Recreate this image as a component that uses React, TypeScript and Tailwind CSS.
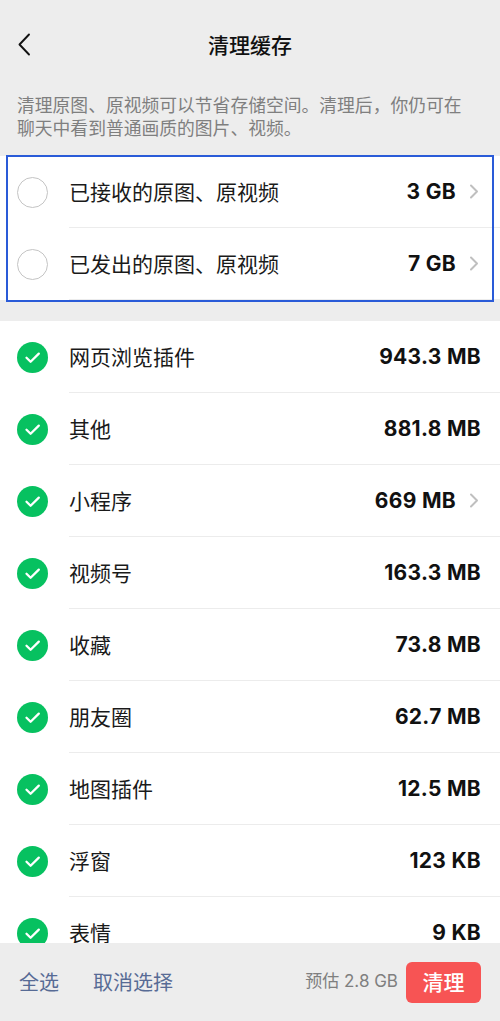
import React from "react";

const cjk = "font-['Noto_Sans_CJK_SC',sans-serif]";
const num = "font-['Inter','Noto_Sans_CJK_SC',sans-serif]";

interface CacheItem {
  label: string;
  size: string;
  arrow?: boolean;
}

const originals: CacheItem[] = [
  { label: "已接收的原图、原视频", size: "3 GB", arrow: true },
  { label: "已发出的原图、原视频", size: "7 GB", arrow: true },
];

const caches: CacheItem[] = [
  { label: "网页浏览插件", size: "943.3 MB" },
  { label: "其他", size: "881.8 MB" },
  { label: "小程序", size: "669 MB", arrow: true },
  { label: "视频号", size: "163.3 MB" },
  { label: "收藏", size: "73.8 MB" },
  { label: "朋友圈", size: "62.7 MB" },
  { label: "地图插件", size: "12.5 MB" },
  { label: "浮窗", size: "123 KB" },
  { label: "表情", size: "9 KB" },
];

const Chevron = () => (
  <svg width="10" height="15" viewBox="0 0 10 15" className="ml-[13px] shrink-0">
    <polyline
      points="2,1.5 8,7.5 2,13.5"
      fill="none"
      stroke="#bfbfbf"
      strokeWidth="2"
      strokeLinecap="round"
      strokeLinejoin="round"
    />
  </svg>
);

const CheckCircle = ({ checked }: { checked: boolean }) =>
  checked ? (
    <svg width="31" height="31" viewBox="0 0 31 31" className="shrink-0">
      <circle cx="15.5" cy="15.5" r="15.5" fill="#07c160" />
      <polyline
        points="9.5,15.8 13.6,19.8 21.8,11.6"
        fill="none"
        stroke="#fff"
        strokeWidth="2.3"
        strokeLinecap="round"
        strokeLinejoin="round"
      />
    </svg>
  ) : (
    <div className="size-[31px] shrink-0 rounded-full border-[1.5px] border-[#c4c4c4]" />
  );

const Row = ({ item, checked }: { item: CacheItem; checked: boolean }) => (
  <div className="flex h-[72px] shrink-0 items-stretch bg-white">
    <div className="flex items-center pl-[17px] pr-[21px]">
      <CheckCircle checked={checked} />
    </div>
    <div
      className={
        "flex flex-1 items-center border-b border-[#ececec] " +
        (item.arrow ? "pr-[21px]" : "pr-[19px]")
      }
    >
      <span className={cjk + " flex-1 text-[21px] text-[#1a1a1a]"}>{item.label}</span>
      <span className={num + " text-[21px] font-bold tracking-[0.3px] text-[#111]"}>
        {item.size}
      </span>
      {item.arrow && <Chevron />}
    </div>
  </div>
);

export default function App() {
  return (
    <div className="relative flex h-[1021px] w-[500px] flex-col overflow-hidden bg-[#ededed]">
      <header className="relative flex h-[90px] shrink-0 items-center justify-center">
        <svg
          width="14"
          height="23"
          viewBox="0 0 14 23"
          className="absolute left-[17px] top-[33px]"
        >
          <polyline
            points="12,1.5 2.5,11.5 12,21.5"
            fill="none"
            stroke="#111"
            strokeWidth="1.9"
            strokeLinecap="round"
            strokeLinejoin="round"
          />
        </svg>
        <h1 className={cjk + " text-[21px] font-medium text-[#111]"}>清理缓存</h1>
      </header>

      <p
        className={
          cjk +
          " pl-[17px] pr-[30px] pt-[3px] pb-[17px] text-[17.8px] leading-[23px] text-[#7f7f7f]"
        }
      >
        清理原图、原视频可以节省存储空间。清理后，你仍可在聊天中看到普通画质的图片、视频。
      </p>

      <section className="relative shrink-0 bg-white">
        {originals.map((item) => (
          <Row key={item.label} item={item} checked={false} />
        ))}
        <div className="pointer-events-none absolute -top-px -bottom-[2px] left-[6px] right-[6px] border-2 border-[#2a5bd8]" />
      </section>

      <div className="mt-[21px] flex min-h-0 flex-1 flex-col overflow-hidden bg-white">
        {caches.map((item) => (
          <Row key={item.label} item={item} checked />
        ))}
      </div>

      <footer className="flex h-[78px] shrink-0 items-center bg-[#ededed] pl-[19px] pr-[19px]">
        <span className={cjk + " text-[20px] text-[#576b95]"}>全选</span>
        <span className={cjk + " ml-[34px] text-[20px] text-[#576b95]"}>取消选择</span>
        <span className={num + " ml-auto text-[17px] text-[#7f7f7f]"}>预估 2.8 GB</span>
        <button
          className={
            cjk +
            " ml-[8px] flex h-[41px] w-[75px] items-center justify-center rounded-[6px] bg-[#f75454] text-[21px] font-medium text-white"
          }
        >
          清理
        </button>
      </footer>
    </div>
  );
}
